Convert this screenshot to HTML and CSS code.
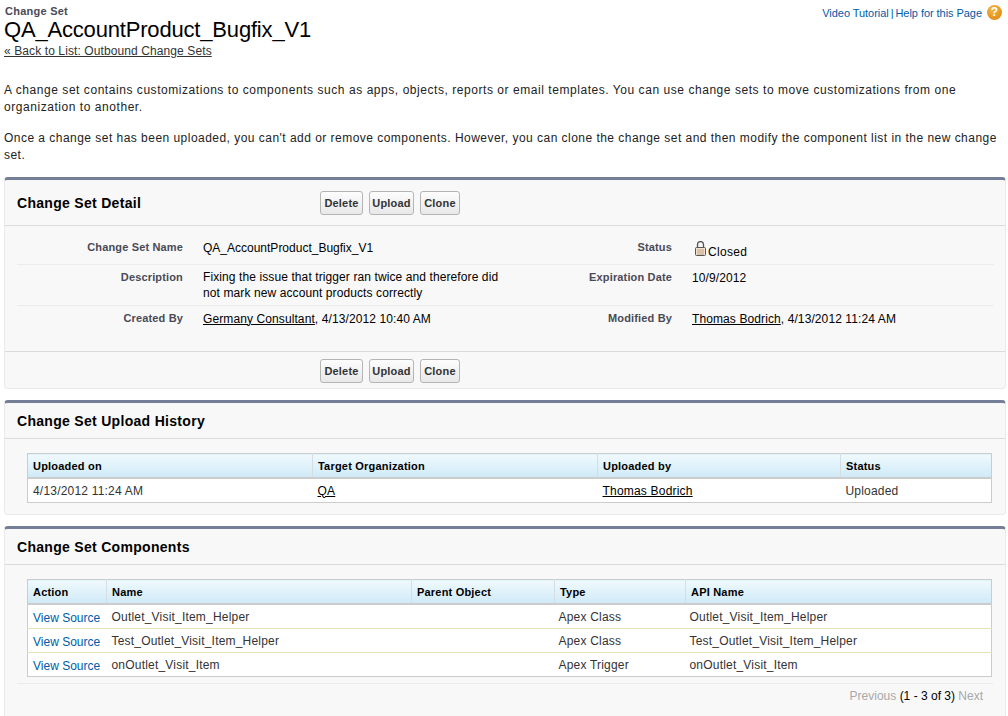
FILE: index.html
```html
<!DOCTYPE html>
<html lang="en">
<head>
  <meta charset="UTF-8" />
  <title>Change Set: QA_AccountProduct_Bugfix_V1</title>
  <link rel="stylesheet" href="styles.css">
</head>
<body>
  <div class="page-head">
    <div>
      <h2 class="page-type">Change Set</h2>
      <h1 class="page-title">QA_AccountProduct_Bugfix_V1</h1>
      <a class="back-link" href="#">« Back to List: Outbound Change Sets</a>
    </div>
    <div class="help-links">
      <a href="#">Video Tutorial</a><span class="help-sep">|</span><a href="#">Help for this Page</a>
      <span class="help-icon">?</span>
    </div>
  </div>

  <div class="intro">
    <p class="intro-first">A change set contains customizations to components such as apps, objects, reports or email templates. You can use change sets to move customizations from one organization to another.</p>
    <p>Once a change set has been uploaded, you can't add or remove components. However, you can clone the change set and then modify the component list in the new change set.</p>
  </div>

  <div class="panel">
    <div class="panel-head">
      <h3>Change Set Detail</h3>
      <div class="buttons">
        <button>Delete</button>
        <button>Upload</button>
        <button>Clone</button>
      </div>
    </div>
    <table class="detail">
      <colgroup>
        <col class="col-label"><col class="col-value"><col class="col-label2"><col class="col-value">
      </colgroup>
      <tr class="row-name">
        <th>Change Set Name</th>
        <td>QA_AccountProduct_Bugfix_V1</td>
        <th>Status</th>
        <td class="status">
          <svg class="lock" width="11" height="15" viewBox="0 0 11 15">
            <path d="M2.5 7V3.5a3 3 0 0 1 6 0V7" fill="none" stroke="#555" stroke-width="1.3"/>
            <rect x="0.5" y="6.5" width="10" height="8" rx="1" fill="#f3e2cf" stroke="#555"/>
            <path d="M2 9h7M2 11h7M2 13h7" stroke="#c0a084"/>
          </svg>Closed
        </td>
      </tr>
      <tr class="row-desc">
        <th>Description</th>
        <td class="desc">Fixing the issue that trigger ran twice and therefore did not mark new account products correctly</td>
        <th>Expiration Date</th>
        <td>10/9/2012</td>
      </tr>
      <tr class="row-last">
        <th>Created By</th>
        <td><a href="#">Germany Consultant</a>, 4/13/2012 10:40 AM</td>
        <th>Modified By</th>
        <td><a href="#">Thomas Bodrich</a>, 4/13/2012 11:24 AM</td>
      </tr>
    </table>
    <div class="panel-foot">
      <div class="buttons">
        <button>Delete</button>
        <button>Upload</button>
        <button>Clone</button>
      </div>
    </div>
  </div>

  <div class="panel">
    <div class="panel-head list-head">
      <h3>Change Set Upload History</h3>
    </div>
    <div class="panel-body history-body">
      <table class="list history">
        <colgroup>
          <col class="h1"><col class="h2"><col class="h3"><col>
        </colgroup>
        <thead>
          <tr><th>Uploaded on</th><th>Target Organization</th><th>Uploaded by</th><th>Status</th></tr>
        </thead>
        <tbody>
          <tr><td>4/13/2012 11:24 AM</td><td><a class="dark" href="#">QA</a></td><td><a class="dark" href="#">Thomas Bodrich</a></td><td>Uploaded</td></tr>
        </tbody>
      </table>
    </div>
  </div>

  <div class="panel panel-last">
    <div class="panel-head list-head">
      <h3>Change Set Components</h3>
    </div>
    <div class="panel-body">
      <table class="list components">
        <colgroup>
          <col class="c1"><col class="c2"><col class="c3"><col class="c4"><col>
        </colgroup>
        <thead>
          <tr><th>Action</th><th>Name</th><th>Parent Object</th><th>Type</th><th>API Name</th></tr>
        </thead>
        <tbody>
          <tr><td class="action-cell"><a class="action" href="#">View Source</a></td><td>Outlet_Visit_Item_Helper</td><td></td><td>Apex Class</td><td>Outlet_Visit_Item_Helper</td></tr>
          <tr><td class="action-cell"><a class="action" href="#">View Source</a></td><td>Test_Outlet_Visit_Item_Helper</td><td></td><td>Apex Class</td><td>Test_Outlet_Visit_Item_Helper</td></tr>
          <tr><td class="action-cell"><a class="action" href="#">View Source</a></td><td>onOutlet_Visit_Item</td><td></td><td>Apex Trigger</td><td>onOutlet_Visit_Item</td></tr>
        </tbody>
      </table>
      <div class="pager">Previous <strong>(1 - 3 of 3)</strong> Next</div>
    </div>
  </div>
</body>
</html>
```

FILE: styles.css
```css
html, body { margin: 0; padding: 0; }
body { font-family: "Liberation Sans", Arial, sans-serif; font-size: 12px; color: #000; background: #fff; height: 716px; overflow: hidden; }
a { color: #000; }
h1, h2, h3, p { margin: 0; }

.page-head { display: flex; justify-content: space-between; padding: 4px 6px 0 4px; height: 57px; box-sizing: border-box; }
.page-type { padding-left: 1px; font-size: 11px; line-height: 14px; color: #4a4a56; letter-spacing: 0.25px; }
.page-title { font-size: 22px; font-weight: normal; line-height: 25px; letter-spacing: -0.18px; margin-top: -1px; }
.back-link { display: block; line-height: 14px; margin-top: 2px; color: #333; letter-spacing: 0.1px; }

.help-links { display: flex; align-items: flex-start; font-size: 11px; line-height: 19px; color: #015ba7; letter-spacing: -0.05px; }
.help-links a { color: #015ba7; text-decoration: none; }
.help-sep { margin: 0 2px; }
.help-icon { width: 15px; height: 15px; border-radius: 50%; margin: 1px 0 0 5px; background: radial-gradient(circle at 40% 30%, #f7b643, #d98208); color: #fff; font-weight: bold; font-size: 12px; line-height: 15px; text-align: center; }

.intro { padding: 25px 4px 0; height: 120px; box-sizing: border-box; color: #222; line-height: 17px; letter-spacing: 0.47px; }
.intro p { margin-bottom: 14px; }
.intro .intro-first { letter-spacing: 0.55px; }

.panel { margin: 0 2px 11px 4px; background: #f8f8f8; border: 1px solid #eaeaea; border-top: 3px solid #747e96; border-radius: 4px; }
.panel-last { margin-bottom: 0; height: 200px; box-sizing: border-box; }
.panel-head { display: flex; align-items: center; height: 46px; padding-left: 12px; border-bottom: 1px solid #dbdbdb; box-sizing: border-box; }
.panel-head h3 { width: 303px; font-size: 14px; line-height: 16px; letter-spacing: 0.3px; }
.list-head { height: 36px; }
.list-head h3 { width: auto; }

.buttons { display: flex; gap: 6px; }
button { width: 40px; height: 24px; padding: 0; border: 1px solid #b5b5b5; border-radius: 3px; background: linear-gradient(#fdfdfd, #e8e8e8); color: #333; font-family: inherit; font-size: 11px; font-weight: bold; letter-spacing: 0.2px; }
button:nth-child(1) { width: 43px; }
button:nth-child(2) { width: 45px; }

.detail { width: 977px; margin: 11px 0 0 12px; border-collapse: collapse; table-layout: fixed; }
.col-label { width: 176px; }
.col-value { width: 312px; }
.col-label2 { width: 177px; }
.detail th { padding: 5px 10px 0 0; text-align: right; vertical-align: top; font-size: 11px; line-height: 14px; color: #4a4a56; letter-spacing: 0.15px; }
.detail td { padding: 5px 0 0 10px; vertical-align: top; line-height: 16px; color: #000; letter-spacing: 0.1px; }
.detail td.desc { padding-top: 4px; }
.detail tr { border-bottom: 1px solid #ececec; }
.detail tr.row-last { border-bottom: none; }
.row-name { height: 27px; }
.row-name th, .row-name td { padding-top: 3px; }
.detail .row-name td { letter-spacing: 0; }
.detail .row-name td.status { padding-top: 4px; letter-spacing: 0.3px; }
.row-desc { height: 41px; }
.row-last { height: 46px; }
.lock { margin: 0 2px 0 3px; }

.panel-foot { height: 37px; padding: 7px 0 0 315px; border-top: 1px solid #dbdbdb; box-sizing: border-box; }

.panel-body { padding: 14px 14px 12px 22px; }
.history-body { padding-bottom: 11px; }
.list { width: 965px; border-collapse: collapse; table-layout: fixed; background: #fff; border: 1px solid #ccc; }
.list th { height: 23px; padding: 0 5px; text-align: left; font-size: 11px; color: #000; background: linear-gradient(#f0f9fd, #cfeaf7); border-left: 1px solid #d5dde2; border-bottom: 2px solid #ccc; letter-spacing: 0.2px; }
.list th:first-child { border-left: none; }
.list td { height: 23px; padding: 0 5px; color: #333; border-top: 1px solid #e6dfb8; letter-spacing: 0.2px; }
.list tbody tr:first-child td { border-top: none; }
.h1 { width: 285px; }
.h2 { width: 285px; }
.h3 { width: 243px; }
.c1 { width: 79px; }
.c2 { width: 305px; }
.c3 { width: 143px; }
.c4 { width: 131px; }
.components td:nth-child(4), .components td:nth-child(5) { padding-left: 4px; }
.list td.action-cell { padding-top: 2px; padding-bottom: 0; height: 21px; letter-spacing: 0; }
.action { color: #015ba7; text-decoration: none; }
.dark { color: #000; }

.pager { margin: 6px -2px 0 -10px; padding: 5px 10px 0 0; border-top: 1px solid #ececec; text-align: right; color: #a8a8a8; line-height: 14px; }
.pager strong { font-weight: normal; color: #000; }
```
